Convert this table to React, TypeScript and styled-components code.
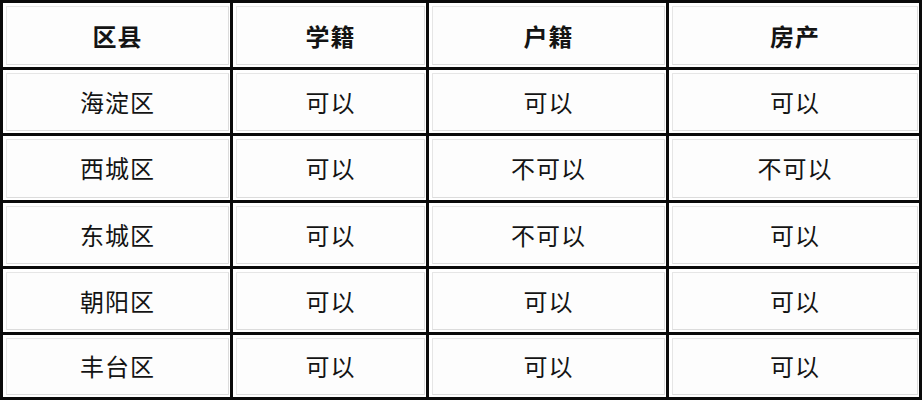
import React from "react";
import styled, { createGlobalStyle } from "styled-components";

const Global = createGlobalStyle`
  html, body { margin: 0; padding: 0; background: #ffffff; }
  body { font-family: "Noto Sans CJK SC", "Noto Sans", sans-serif; }
`;

const Table = styled.div`
  display: grid;
  grid-template-columns: 227px 193px 237px 250px;
  grid-template-rows: 64px 63px 64px 63px 63px 62px;
  gap: 3px;
  padding: 3px;
  width: 922px;
  height: 400px;
  box-sizing: border-box;
  background: #0a0a0a;
`;

const Cell = styled.div<{ $head?: boolean }>`
  background: #ffffff;
  padding: 3px 1px 2px 3px;
  box-sizing: border-box;
  display: flex;
`;

const Inner = styled.div<{ $head?: boolean }>`
  flex: 1;
  border: 1px solid #dcdcdc;
  border-top-color: #e6e6e6;
  border-left-color: #e6e6e6;
  background: #fdfdfd;
  display: flex;
  align-items: center;
  justify-content: center;
  font-size: 24px;
  font-weight: ${(p) => (p.$head ? 700 : 400)};
  color: #141414;
  letter-spacing: 1px;
  line-height: 1;
  padding-bottom: ${(p) => (p.$head ? "0" : "1px")};
`;

const header = ["区县", "学籍", "户籍", "房产"];
const rows = [
  ["海淀区", "可以", "可以", "可以"],
  ["西城区", "可以", "不可以", "不可以"],
  ["东城区", "可以", "不可以", "可以"],
  ["朝阳区", "可以", "可以", "可以"],
  ["丰台区", "可以", "可以", "可以"],
];

export default function App() {
  return (
    <>
      <Global />
      <Table>
        {header.map((h) => (
          <Cell key={h}>
            <Inner $head>{h}</Inner>
          </Cell>
        ))}
        {rows.map((r, i) =>
          r.map((c, j) => (
            <Cell key={`${i}-${j}`}>
              <Inner>{c}</Inner>
            </Cell>
          ))
        )}
      </Table>
    </>
  );
}
